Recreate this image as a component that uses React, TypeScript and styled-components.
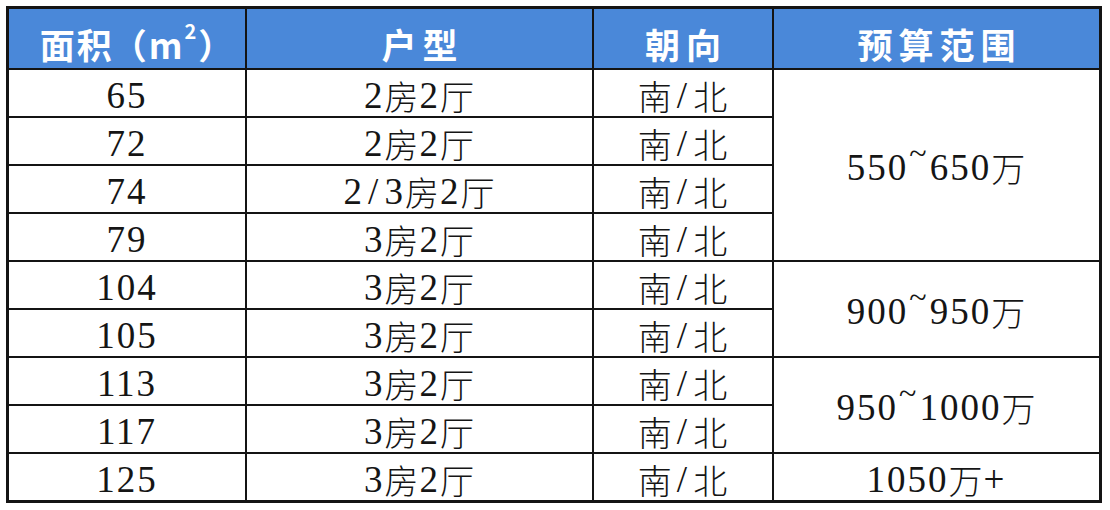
import React from "react";
import styled, { createGlobalStyle } from "styled-components";

const Global = createGlobalStyle`
  html, body { margin: 0; padding: 0; background: #ffffff; }
  body { width: 1110px; height: 510px; overflow: hidden; }
`;

const Page = styled.div`
  padding: 6px 0 0 6px;
`;

const Table = styled.div`
  display: grid;
  grid-template-columns: 236px 345px 178px 325px;
  grid-template-rows: 59px repeat(9, 46px);
  gap: 2px;
  width: max-content;
  background: #141414;
  border: 3px solid #141414;
`;

const HeadCell = styled.div<{ $tight?: boolean }>`
  background: #4a88d9;
  color: #ffffff;
  display: flex;
  align-items: center;
  justify-content: center;
  font-family: "Noto Sans CJK SC", sans-serif;
  font-weight: 700;
  font-size: 35px;
  letter-spacing: ${(p) => (p.$tight ? "0px" : "6px")};
  padding: 10px 0 0 ${(p) => (p.$tight ? "19px" : "6px")};
  box-sizing: border-box;
  white-space: nowrap;
`;

const OpenParen = styled.span`
  margin-right: 2px;
`;

const Gap = styled.span`
  display: inline-block;
  width: 2px;
`;

const Sup = styled.span`
  font-size: 20px;
  position: relative;
  top: -13px;
  margin: 0 2px 0 2px;
`;

const Cell = styled.div<{ $span?: number }>`
  background: #ffffff;
  color: #151515;
  display: flex;
  align-items: center;
  justify-content: center;
  font-family: "Liberation Serif", "Noto Sans CJK SC", serif;
  font-weight: 400;
  font-size: 37px;
  letter-spacing: 2px;
  padding-top: 4px;
  grid-row: ${(p) => (p.$span ? `span ${p.$span}` : "auto")};
`;

const Cjk = styled.span`
  font-family: "Noto Sans CJK SC", sans-serif;
  font-weight: 300;
  font-size: 34px;
  letter-spacing: 1px;
`;

const Slash = styled.span`
  font-family: "Liberation Serif", serif;
  margin: 0 4px;
`;

const Tilde = styled.span`
  display: inline-block;
  position: relative;
  top: -14px;
  font-size: 32px;
  margin: 0 1px;
`;

const rows = [
  { area: "65", type: "2房2厅" },
  { area: "72", type: "2房2厅" },
  { area: "74", type: "2/3房2厅" },
  { area: "79", type: "3房2厅" },
  { area: "104", type: "3房2厅" },
  { area: "105", type: "3房2厅" },
  { area: "113", type: "3房2厅" },
  { area: "117", type: "3房2厅" },
  { area: "125", type: "3房2厅" },
];

const budgets: Record<number, { span: number; lo?: string; hi: string; plus?: boolean }> = {
  0: { span: 4, lo: "550", hi: "650" },
  4: { span: 2, lo: "900", hi: "950" },
  6: { span: 2, lo: "950", hi: "1000" },
  8: { span: 1, hi: "1050", plus: true },
};

function Mixed({ text }: { text: string }) {
  const parts = text.split(/([^\x00-\x7f]+)/).filter(Boolean);
  return (
    <>
      {parts.map((p, i) =>
        /[^\x00-\x7f]/.test(p) ? (
          <Cjk key={i}>{p}</Cjk>
        ) : p.includes("/") ? (
          <span key={i}>
            {p.split("/")[0]}
            <Slash>/</Slash>
            {p.split("/")[1]}
          </span>
        ) : (
          <span key={i}>{p}</span>
        )
      )}
    </>
  );
}

export default function App() {
  return (
    <>
      <Global />
      <Page>
        <Table>
          <HeadCell $tight>
            面<Gap />积<OpenParen>（</OpenParen>m<Sup>2</Sup>）
          </HeadCell>
          <HeadCell>户型</HeadCell>
          <HeadCell>朝向</HeadCell>
          <HeadCell>预算范围</HeadCell>
          {rows.map((r, i) => {
            const b = budgets[i];
            return (
              <React.Fragment key={i}>
                <Cell>{r.area}</Cell>
                <Cell>
                  <Mixed text={r.type} />
                </Cell>
                <Cell>
                  <Cjk>南</Cjk>
                  <Slash>/</Slash>
                  <Cjk>北</Cjk>
                </Cell>
                {b && (
                  <Cell $span={b.span}>
                    {b.lo && (
                      <>
                        <span>{b.lo}</span>
                        <Tilde>~</Tilde>
                      </>
                    )}
                    <span>{b.hi}</span>
                    <Cjk>万</Cjk>
                    {b.plus && <span>+</span>}
                  </Cell>
                )}
              </React.Fragment>
            );
          })}
        </Table>
      </Page>
    </>
  );
}
